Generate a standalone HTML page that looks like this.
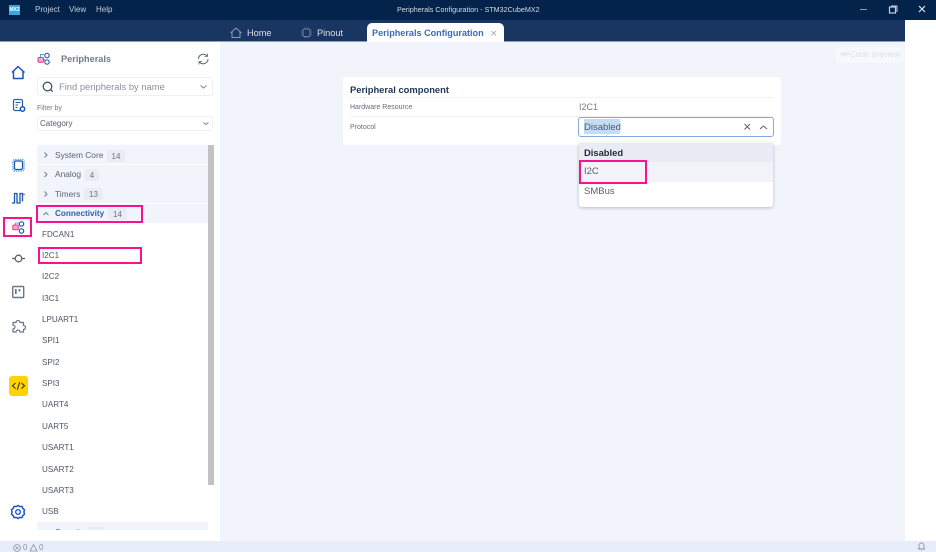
<!DOCTYPE html>
<html><head><meta charset="utf-8"><style>
html,body{margin:0;padding:0;width:936px;height:552px;overflow:hidden;background:#fff;font-family:"Liberation Sans",sans-serif}
#w{position:absolute;left:0;top:0;width:936px;height:552px;overflow:hidden;filter:blur(.3px)}
.a{position:absolute;white-space:nowrap}
svg{position:absolute;overflow:visible;fill:none}
.it{position:absolute;left:42px;font-size:8.1px;line-height:12px;color:#4a5566;margin-top:1px}
.row{position:absolute;left:37px;width:171px;height:19px;background:#f1f4fa}
.rt{position:absolute;left:55px;font-size:8.4px;line-height:12px;color:#5a6474}
.bdg{position:absolute;height:12px;background:#e9ecf2;border-radius:2px;font-size:8px;line-height:13px;color:#6b7482;text-align:center}
.pk{position:absolute;border:2px solid #f8128e;box-sizing:border-box}
</style></head><body><div id="w">
<div class="a" style="left:0;top:0;width:936px;height:20px;background:#03234b"></div>
<div class="a" style="left:0;top:20px;width:905px;height:22px;background:#193662;border-bottom:1px solid #8f9db5;box-sizing:border-box"></div>
<div class="a" style="left:220px;top:42px;width:685px;height:499px;background:#f1f4fa"></div>
<div class="a" style="left:0;top:541px;width:936px;height:11px;background:#e8edfa"></div>

<div class="a" style="left:9px;top:4.500px;width:11px;height:10px;background:#3ba7e0;color:#fff;font-size:5px;font-weight:bold;line-height:10px;text-align:center">MX2</div>
<div class="a" style="left:35px;top:4px;font-size:8px;line-height:12px;color:#c3cddb">Project</div>
<div class="a" style="left:69px;top:4px;font-size:8px;line-height:12px;color:#c3cddb">View</div>
<div class="a" style="left:96px;top:4px;font-size:8px;line-height:12px;color:#c3cddb">Help</div>
<div class="a" style="left:397px;top:3.500px;font-size:7.200px;line-height:12px;color:#d5dce6">Peripherals Configuration - STM32CubeMX2</div>
<svg style="left:0;top:0" width="936" height="20">
<path d="M860 9.500h7" stroke="#8d9cb2" stroke-width="1"/>
<rect x="889.500" y="7" width="6" height="6" stroke="#c4cedb" stroke-width="1.200"/><path d="M891 6h6v6" stroke="#c4cedb" stroke-width="1"/>
<path d="M919 6l6 6M925 6l-6 6" stroke="#dfe5ed" stroke-width="1.200"/>
</svg>

<svg style="left:0;top:0" width="360" height="42">
<path d="M230.500 33l5.500-5 5.500 5M232 32v5.500h8V32" stroke="#8d9bb0" stroke-width="1"/>
<rect x="303" y="29" width="7" height="7.500" rx="1.500" stroke="#6f7f99" stroke-width="1"/>
<path d="M301 31h2M301 33h2M301 35h2M310 31h2M310 33h2M310 35h2M304.500 27.500v1.500M306.500 27.500v1.500M308.500 27.500v1.500M304.500 36.500v1.500M306.500 36.500v1.500M308.500 36.500v1.500" stroke="#5e7090" stroke-width=".8"/>
</svg>
<div class="a" style="left:247px;top:27px;font-size:9.200px;line-height:12px;color:#d9e0ea">Home</div>
<div class="a" style="left:317px;top:27px;font-size:9.200px;line-height:12px;color:#d9e0ea">Pinout</div>
<div class="a" style="left:367px;top:23px;width:137px;height:19px;background:#fff;border-radius:5px 5px 0 0"></div>
<div class="a" style="left:372px;top:27px;font-size:9.100px;font-weight:bold;line-height:12px;color:#3b6bb5">Peripherals Configuration</div>
<svg style="left:0;top:0" width="510" height="42"><path d="M491.500 31l4.500 4.500M496 31l-4.500 4.500" stroke="#a9b1bd" stroke-width=".9"/></svg>

<div class="a" style="left:836px;top:47px;width:68px;height:15.500px;background:#f6f8fc;border-radius:4px"></div>
<div class="a" style="left:840.500px;top:49px;font-size:6px;line-height:12px;font-weight:bold;color:#d2d7e0">&lt;/&gt;</div>
<div class="a" style="left:850px;top:49px;font-size:8.200px;line-height:12px;color:#dde1e8">Code preview</div>

<!-- left rail icons -->
<svg style="left:0;top:0" width="36" height="530">
<path d="M12 72.500l6-6 6.500 6M13.500 71v7.500h9.500v-7.500" stroke="#1e55b8" stroke-width="1.500" stroke-linejoin="round"/>
<rect x="13.500" y="99.500" width="9" height="11" rx="1.500" stroke="#2a5cb4" stroke-width="1.200"/>
<path d="M15.500 102.500h5M15.500 105h2.500M15.500 107.500h2" stroke="#2a5cb4" stroke-width=".9"/>
<circle cx="22.500" cy="109" r="2.200" fill="#fff" stroke="#1e55b8" stroke-width="1.500"/>
<rect x="14.500" y="161" width="8" height="8.500" rx="1.500" stroke="#1e55b0" stroke-width="1.200"/>
<rect x="13" y="159.500" width="11" height="11.500" rx="2" stroke="#6fb0e8" stroke-width="1.600" stroke-dasharray="1.500 .8"/>
<path d="M12 203h2.500v-9.500h2.500v9.500h3v-9.500h2.500v8" stroke="#1e55b0" stroke-width="1.300"/>
<circle cx="24" cy="194.500" r=".9" fill="#e33b8c"/>
<rect x="12.800" y="225" width="5.500" height="4.800" rx="1" fill="#f7a8cb" stroke="#e33b8c" stroke-width="1"/>
<circle cx="21.500" cy="224" r="2.200" stroke="#1e55b8" stroke-width="1.200"/>
<circle cx="21.500" cy="231" r="2.200" stroke="#1e55b8" stroke-width="1.200"/>
<path d="M18 227.500h1.500M15.500 225v-2h3.500" stroke="#3d8fd4" stroke-width=".8"/>
<circle cx="18.500" cy="258.500" r="3.300" stroke="#59626f" stroke-width="1.300"/>
<path d="M12 258.500h3M22 258.500h3" stroke="#59626f" stroke-width="1.300"/>
<rect x="12.700" y="286.500" width="11" height="11" rx="1" stroke="#6d7684" stroke-width="1.400"/>
<path d="M15.800 289v5M19.500 289v2.500" stroke="#6d7684" stroke-width="1.700"/>
<path d="M13 322.500h3a2 2 0 0 1 4 0h3.500v3a2 2 0 0 1 0 4v2.500h-3.500a2 2 0 0 0-4 0h-3v-3a2 2 0 0 0 0-4z" stroke="#6a7482" stroke-width="1.200"/>
<path d="M18 506l1.800 1.100 2.200-.2.800 2 1.700 1.400-.6 2.200.6 2.200-1.700 1.400-.8 2-2.200-.2-1.800 1.100-1.800-1.100-2.200.2-.8-2-1.700-1.400.6-2.200-.6-2.200 1.700-1.400.8-2 2.200.2z" stroke="#1e55c4" stroke-width="1.500" transform="translate(0 -.5)"/>
<circle cx="18" cy="512" r="2.300" stroke="#1e55c4" stroke-width="1.400"/>
</svg>
<div class="a" style="left:9px;top:376px;width:19px;height:20px;background:#ffd200;border-radius:3px"></div>
<svg style="left:0;top:0" width="36" height="400"><path d="M15.500 383l-3 2.800 3 2.800M21.500 383l3 2.800-3 2.800M19.700 382l-2.400 7.800" stroke="#3a3420" stroke-width="1.100"/></svg>

<!-- panel head -->
<svg style="left:0;top:0" width="220" height="130">
<rect x="38" y="57.500" width="5.500" height="4.800" rx="1" fill="#f7a8cb" stroke="#e33b8c" stroke-width="1"/>
<circle cx="47" cy="55.500" r="2.200" stroke="#2b64b8" stroke-width="1.200"/>
<circle cx="47" cy="62" r="2.200" stroke="#2b64b8" stroke-width="1.200"/>
<path d="M43.500 59.500h1.500M40.500 57v-2.500h3.500" stroke="#3aa0d8" stroke-width=".9"/>
<path d="M198.500 59a4.800 4.800 0 0 1 8.500-3M208 59a4.800 4.800 0 0 1-8.500 3" stroke="#5c6675" stroke-width="1"/>
<path d="M207.500 53.500v3h-3M199 64.500v-3h3" stroke="#5c6675" stroke-width=".8"/>
</svg>
<div class="a" style="left:61px;top:52.500px;font-size:9.200px;font-weight:bold;line-height:12px;color:#737b88">Peripherals</div>
<div class="a" style="left:37px;top:77px;width:176px;height:19px;box-sizing:border-box;border:1px solid #eef0f4;border-radius:3px;background:#fff"></div>
<svg style="left:0;top:0" width="220" height="130">
<circle cx="47.500" cy="86.500" r="4.300" stroke="#47505e" stroke-width="1.300"/><path d="M50.700 89.700l2 2" stroke="#47505e" stroke-width="1.300"/>
<path d="M200.500 85.500l3 2.500 3-2.500" stroke="#7b8390" stroke-width="1"/>
<path d="M203.500 122.500l2.500 2 2.500-2" stroke="#7b8390" stroke-width=".9"/>
</svg>
<div class="a" style="left:59px;top:81px;font-size:9.400px;line-height:12px;color:#8a919c">Find peripherals by name</div>
<div class="a" style="left:37px;top:104px;font-size:7px;line-height:10px;color:#717985">Filter by</div>
<div class="a" style="left:37px;top:116px;width:176px;height:15px;box-sizing:border-box;border:1px solid #eef0f4;border-radius:3px"></div>
<div class="a" style="left:40px;top:118px;font-size:8px;line-height:12px;color:#565f6d">Category</div>

<!-- tree -->
<div class="row" style="top:145px"></div><div class="row" style="top:165px"></div><div class="row" style="top:184px"></div><div class="row" style="top:204px"></div>
<div class="a" style="left:37px;top:522px;width:171px;height:8px;background:#f1f4fa;overflow:hidden"><div class="a" style="left:18px;top:4px;font-size:8.400px;line-height:12px;color:#5a6474">Security</div><div class="a" style="left:51px;top:5px;width:16px;height:12px;background:#e9ecf2"></div></div>
<svg style="left:0;top:0" width="60" height="230">
<path d="M44.500 152.500l2.500 2.500-2.500 2.500M44.500 172l2.500 2.500-2.500 2.500M44.500 191.500l2.500 2.500-2.500 2.500" stroke="#6e7683" stroke-width=".9"/>
<path d="M43.500 215l2.500-2.500 2.500 2.500" stroke="#6e7683" stroke-width=".9"/>
</svg>
<div class="rt" style="top:149px">System Core</div><div class="bdg" style="left:107px;top:149.500px;width:18px">14</div>
<div class="rt" style="top:168px">Analog</div><div class="bdg" style="left:85px;top:169px;width:14px">4</div>
<div class="rt" style="top:187.500px">Timers</div><div class="bdg" style="left:84px;top:188px;width:19px">13</div>
<div class="rt" style="top:207.500px;color:#2f5fb0;font-weight:bold;font-size:8.200px">Connectivity</div><div class="bdg" style="left:108px;top:208px;width:19px">14</div>
<div class="a" style="left:208px;top:145px;width:6px;height:340px;background:#c3c3c3"></div>

<div class="it" style="top:227.500px">FDCAN1</div><div class="it" style="top:249px">I2C1</div><div class="it" style="top:270px">I2C2</div><div class="it" style="top:292px">I3C1</div><div class="it" style="top:313px">LPUART1</div><div class="it" style="top:334px">SPI1</div><div class="it" style="top:356px">SPI2</div><div class="it" style="top:377px">SPI3</div><div class="it" style="top:398px">UART4</div><div class="it" style="top:420px">UART5</div><div class="it" style="top:441px">USART1</div><div class="it" style="top:463px">USART2</div><div class="it" style="top:484px">USART3</div><div class="it" style="top:505px">USB</div>

<!-- card -->
<div class="a" style="left:343px;top:77px;width:438px;height:68px;background:#fff;border-radius:3px"></div>
<div class="a" style="left:350px;top:84px;font-size:9.400px;font-weight:bold;line-height:12px;color:#1f3553">Peripheral component</div>
<div class="a" style="left:350px;top:97px;width:424px;height:1px;background:#f0f1f4"></div>
<div class="a" style="left:350px;top:116px;width:424px;height:1px;background:#f0f1f4"></div>
<div class="a" style="left:350px;top:103px;font-size:7px;line-height:10px;color:#656d79">Hardware Resource</div>
<div class="a" style="left:350px;top:122.500px;font-size:7px;line-height:10px;color:#656d79">Protocol</div>
<div class="a" style="left:579px;top:101px;font-size:9px;line-height:12px;color:#767d88">I2C1</div>
<div class="a" style="left:578px;top:117px;width:196px;height:20px;box-sizing:border-box;border:1px solid #86a9dc;border-radius:3px;background:#fff"></div>
<div class="a" style="left:584px;top:119px;height:15px;width:36px;background:#c4ddf5"></div>
<div class="a" style="left:584px;top:121.500px;font-size:9.500px;line-height:12px;color:#4f5967">Disabled</div>
<svg style="left:0;top:0" width="780" height="140"><path d="M744.500 124l5.500 5.500M750 124l-5.500 5.500" stroke="#5c6573" stroke-width="1"/><path d="M760 129l3.500-3 3.500 3" stroke="#5c6573" stroke-width="1"/></svg>
<div class="a" style="left:579px;top:143px;width:194px;height:64px;background:#fff;box-shadow:0 1px 3px rgba(70,80,100,.35);border-radius:0 0 3px 3px"></div>
<div class="a" style="left:579px;top:143px;width:194px;height:19px;background:#e9ecf4"></div>
<div class="a" style="left:579px;top:162px;width:194px;height:20px;background:#f1f3f8"></div>
<div class="a" style="left:584px;top:146.500px;font-size:9.400px;font-weight:bold;line-height:12px;color:#232b38">Disabled</div>
<div class="a" style="left:584px;top:166px;font-size:9.500px;line-height:12px;color:#59626f">I2C</div>
<div class="a" style="left:584px;top:186px;font-size:9.500px;line-height:12px;color:#59626f">SMBus</div>

<!-- pink highlight boxes -->
<div class="pk" style="left:3px;top:217px;width:29px;height:20px"></div>
<div class="pk" style="left:36px;top:205px;width:107px;height:18px"></div>
<div class="pk" style="left:38px;top:247px;width:104px;height:17px"></div>
<div class="pk" style="left:579px;top:160px;width:68px;height:23.500px"></div>

<!-- status -->
<svg style="left:0;top:0" width="936" height="552">
<circle cx="17" cy="548" r="3.400" stroke="#8a93a3" stroke-width=".8"/><path d="M15.500 546.500l3 3M18.500 546.500l-3 3" stroke="#8a93a3" stroke-width=".7"/>
<path d="M33.500 544.500l3.500 6.500h-7z" stroke="#8a93a3" stroke-width=".8"/>
<path d="M919 549v-3.500a2.500 2.500 0 0 1 5 0v3.500zM918 549h7M921.500 550.500h.5" stroke="#8a93a3" stroke-width=".9"/>
</svg>
<div class="a" style="left:23px;top:543px;font-size:8px;line-height:10px;color:#8a93a3">0</div>
<div class="a" style="left:39px;top:543px;font-size:8px;line-height:10px;color:#8a93a3">0</div>
</div></body></html>
